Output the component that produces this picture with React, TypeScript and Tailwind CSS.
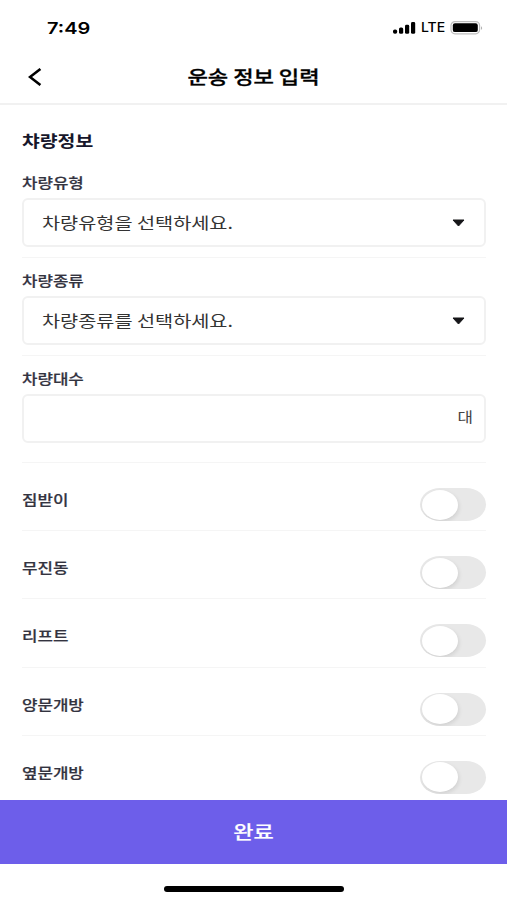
import React, { useState } from 'react';
import clsx from 'clsx';

const SELECTS = [
  { label: '차량유형', placeholder: '차량유형을 선택하세요.' },
  { label: '차량종류', placeholder: '차량종류를 선택하세요.' },
];

const OPTIONS = ['짐받이', '무진동', '리프트', '양문개방', '옆문개방'];

const StatusBar: React.FC = () => (
  <div className="flex h-[50px] items-center justify-between pt-[5px] pr-[23px] pl-[47px]">
    <span className="origin-left scale-x-[1.25] font-[Inter] text-[16px] leading-5 font-semibold text-black">7:49</span>
    <div className="flex items-center">
      <svg width="24" height="14" viewBox="0 0 24 14" fill="#000">
        <rect x="1" y="8.4" width="4.2" height="4.4" rx="1.8" />
        <rect x="7" y="6.4" width="4.2" height="6.4" rx="1.5" />
        <rect x="13" y="3.8" width="4.2" height="9" rx="1.4" />
        <rect x="19" y="1" width="4.2" height="11.8" rx="1.4" />
      </svg>
      <span className="ml-[5px] w-[24px] origin-left scale-x-[1.12] font-[Inter] text-[12.5px] leading-5 font-medium text-black">LTE</span>
      <svg className="ml-[5px]" width="34" height="14" viewBox="0 0 34 14">
        <rect x="1" y="0.6" width="28.6" height="12.2" rx="4" fill="none" stroke="#bdbdbd" strokeWidth="1.2" />
        <rect x="2.8" y="2.3" width="25" height="8.8" rx="2.2" fill="#000" />
        <path d="M31.2 5.2c1.2.4 1.2 3.2 0 3.6z" fill="#a0a0a0" />
      </svg>
    </div>
  </div>
);

const Label: React.FC<{ children: React.ReactNode }> = ({ children }) => (
  <span className="block w-fit origin-left scale-x-[1.2] text-[14px] leading-5 font-medium text-[#33333f] [-webkit-text-stroke:0.2px_#33333f]">
    {children}
  </span>
);

const Toggle: React.FC = () => {
  const [on, setOn] = useState(false);
  return (
    <button
      onClick={() => setOn(!on)}
      className={clsx(
        'flex h-[33px] w-[66px] items-center overflow-hidden rounded-[20px/16.5px] px-[2px]',
        on ? 'justify-end bg-[#6d5eea]' : 'justify-start bg-[#e8e8e8]'
      )}
    >
      <span className="h-[30px] w-[36px] rounded-[50%] bg-white shadow-[1px_2px_4px_rgba(0,0,0,0.1)]" />
    </button>
  );
};

export default function App() {
  return (
    <div className="flex h-[900px] w-[507px] flex-col overflow-hidden bg-white font-['Noto_Sans_CJK_KR',sans-serif]">
      <StatusBar />

      <header className="grid h-[55px] grid-cols-[60px_1fr_60px] items-center border-b-2 border-[#f1f1f1]">
        <button className="pl-[28px]">
          <svg width="14" height="18" viewBox="0 0 14 18" fill="none" stroke="#000" strokeWidth="2.6">
            <path d="M12.4 1 2 9l10.4 8" />
          </svg>
        </button>
        <h1 className="scale-x-[1.23] pb-[2px] text-center text-[18px] leading-6 font-medium text-black [-webkit-text-stroke:0.3px_#000]">
          운송 정보 입력
        </h1>
      </header>

      <main className="min-h-0 flex-1 overflow-hidden pr-[21px] pl-[22px]">
        <h2 className="mt-[23px] w-fit origin-left scale-x-[1.21] text-[16px] leading-6 font-bold text-[#17172b]">챠량정보</h2>

        {SELECTS.map((item, i) => (
          <div key={item.label} className={clsx('h-[98px] border-b border-[#f5f5f5]', i === 0 && 'mt-[8px]')}>
            <div className="pt-[12px]">
              <Label>{item.label}</Label>
            </div>
            <button className="mt-[6px] flex h-[49px] w-full items-center justify-between rounded-[6px] border-2 border-[#f1f1f1] pr-[19px] pl-[18px]">
              <span className="origin-left scale-x-[1.23] pb-[2px] text-[16px] leading-6 text-[#333]">{item.placeholder}</span>
              <svg className="mt-px" width="13" height="8" viewBox="0 0 13 8">
                <path d="M1 1h11L6.5 7z" fill="#161619" stroke="#161619" strokeWidth="1" strokeLinejoin="round" />
              </svg>
            </button>
          </div>
        ))}

        <div className="h-[107px] border-b border-[#f5f5f5] pt-[12px]">
          <Label>차량대수</Label>
          <div className="mt-[6px] flex h-[49px] items-center rounded-[6px] border-2 border-[#f1f1f1] pr-[11px]">
            <input className="min-w-0 flex-1 px-[18px] outline-none" />
            <span className="origin-right scale-x-[1.2] pb-[5px] text-[14px] leading-5 text-[#444]">대</span>
          </div>
        </div>

        {OPTIONS.map((name) => (
          <div key={name} className="flex h-[68.2px] items-start justify-between border-b border-[#f5f5f5] pt-[25px]">
            <div className="pt-[1px]">
              <Label>{name}</Label>
            </div>
            <Toggle />
          </div>
        ))}
      </main>

      <button className="flex h-[64px] shrink-0 items-center justify-center bg-[#6d5eea] pb-[2px] text-[18px] font-medium text-white">
        <span className="scale-x-[1.22] [-webkit-text-stroke:0.2px_#fff]">완료</span>
      </button>
      <div className="flex h-[36px] shrink-0 justify-center pt-[22px] pl-px">
        <div className="h-[6px] w-[180px] rounded-full bg-black" />
      </div>
    </div>
  );
}
